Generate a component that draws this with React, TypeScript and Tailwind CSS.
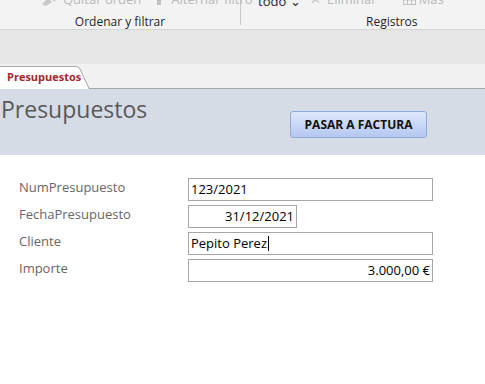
import React from "react";

const font = { fontFamily: '"Segoe UI", "Open Sans", "Noto Sans", sans-serif' };

export default function App() {
  return (
    <div className="w-[485px] h-[384px] overflow-hidden bg-white relative" style={font}>
      {/* Ribbon */}
      <div className="h-[30px] bg-[#f3f3f3] border-b border-[#d5d5d5] flex relative">
        <div className="w-[241px] border-r border-[#c8c8c8] h-[25px] relative">
          <div className="absolute -top-[10px] left-[40px] flex items-center text-[13px] text-[#b8b8b8] whitespace-nowrap">
            <svg width="17" height="12" viewBox="0 0 17 12" className="mr-[6px]"><path d="M2 10 L8 4 L12 8 L6 12 Z" fill="#c8c8c8" /><path d="M10 2 L15 7" stroke="#c8c8c8" strokeWidth="2" /></svg>
            <span>Quitar orden</span>
            <span className="inline-block w-[4px] h-[10px] bg-[#c0c0c0] ml-[16px] mr-[10px]" />
            <span>Alternar filtro</span>
          </div>
          <div className="absolute top-[13px] left-0 w-full text-center text-[12px] text-[#262626]">Ordenar y filtrar</div>
        </div>
        <div className="flex-1 relative h-[25px]">
          <div className="absolute -top-[8px] left-[17px] text-[13px] text-[#262626] whitespace-nowrap">todo ⌄</div>
          <div className="absolute -top-[10px] left-[69px] flex items-center text-[13px] text-[#b8b8b8] whitespace-nowrap">
            <span className="text-[#c4c4c4] mr-[6px]">✕</span>
            <span>Eliminar</span>
            <svg width="13" height="10" viewBox="0 0 13 10" className="ml-[26px] mr-[3px]"><rect x="0.5" y="0.5" width="12" height="9" fill="none" stroke="#c0c0c0" /><path d="M4.5 0 V10 M8.5 0 V10 M0 5 H13" stroke="#c0c0c0" /></svg>
            <span>Más</span>
          </div>
          <div className="absolute top-[13px] left-[125px] text-[12px] text-[#262626]">Registros</div>
        </div>
      </div>
      {/* Gray band */}
      <div className="h-[34px] bg-[#e6e6e6]" />
      {/* Tab strip */}
      <div className="h-[25px] bg-[#f1f1f1] border-b border-[#a6a6a6] flex items-end">
        <div className="relative h-[23px] w-[90px] -mb-px">
          <svg className="absolute inset-0" width="90" height="23" viewBox="0 0 90 23">
            <path d="M0 0.5 H76 Q79 0.5 80 3 L89 23 H0 Z" fill="#ffffff" />
            <path d="M0 0.5 H76 Q79 0.5 80 3 L89 22.5" fill="none" stroke="#a6a6a6" />
          </svg>
          <div className="relative pl-[7px] pt-[3px] text-[11px] font-bold text-[#a4262c] leading-[16px]">Presupuestos</div>
        </div>
      </div>
      {/* Header */}
      <div className="h-[66px] bg-[#d6dce5] relative">
        <div className="absolute left-[1px] top-[3px] text-[23px] text-[#595959]">Presupuestos</div>
        <button className="absolute left-[290px] top-[22px] w-[137px] h-[27px] rounded-[3px] border border-[#8eaadb] bg-gradient-to-b from-[#dfe8fb] to-[#b4c7f0] text-[12px] font-bold text-[#111]">
          PASAR A FACTURA
        </button>
      </div>
      {/* Body */}
      <div className="pt-[23px] pl-[19px] flex flex-col gap-[4px] text-[13px]">
        <Row label="NumPresupuesto"><Box w="w-[245px]">123/2021</Box></Row>
        <Row label="FechaPresupuesto"><Box w="w-[109px]" right>31/12/2021</Box></Row>
        <Row label="Cliente"><Box w="w-[245px]">Pepito Perez<span className="inline-block w-px h-[15px] bg-black align-middle ml-px" /></Box></Row>
        <Row label="Importe"><Box w="w-[245px]" right>3.000,00 €</Box></Row>
      </div>
    </div>
  );
}

function Row({ label, children }: { label: string; children: React.ReactNode }) {
  return (
    <div className="flex items-start">
      <div className="w-[169px] text-[#666666] text-[13px] leading-[17px] pt-px">{label}</div>
      {children}
    </div>
  );
}

function Box({ w, right, children }: { w: string; right?: boolean; children: React.ReactNode }) {
  return (
    <div className={`${w} h-[23px] border border-[#a6a6a6] flex items-center px-[2px] text-[13px] text-black ${right ? "justify-end" : ""}`}>
      {children}
    </div>
  );
}
